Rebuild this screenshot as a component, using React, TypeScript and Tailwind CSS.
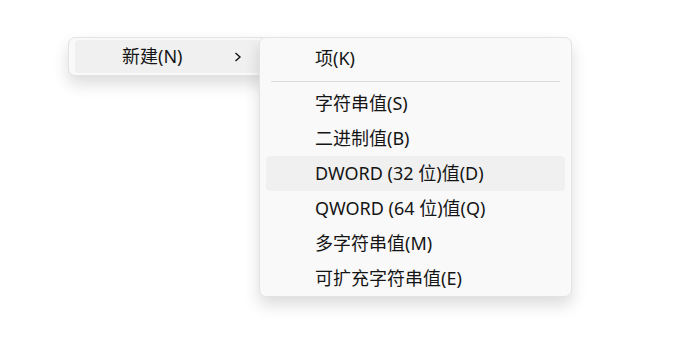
import React from "react";

const items = [
  "字符串值(S)",
  "二进制值(B)",
  "DWORD (32 位)值(D)",
  "QWORD (64 位)值(Q)",
  "多字符串值(M)",
  "可扩充字符串值(E)",
];

export default function App() {
  return (
    <div
      className="relative w-[685px] h-[353px] bg-white overflow-hidden text-[18px] text-[#151515]"
      style={{ fontFamily: '"Noto Sans", "Noto Sans CJK SC", sans-serif' }}
    >
      {/* parent menu */}
      <div className="absolute left-[68px] top-[37px] w-[200px] rounded-[7px] border border-[#e3e3e3] bg-[#f9f9f9] px-[6px] pt-[2px] pb-[2px] shadow-[0_8px_16px_rgba(0,0,0,0.14)]">
        <div className="flex h-[33px] items-center rounded-[4px] bg-[#f0f0f0] pl-[47px] pr-[19px]">
          <span className="flex-1">新建(N)</span>
          <svg width="8" height="10" viewBox="0 0 8 10" className="mt-[1px]">
            <path d="M1.5 1 L6 5 L1.5 9" fill="none" stroke="#151515" strokeWidth="1.4" />
          </svg>
        </div>
      </div>

      {/* submenu */}
      <div className="absolute left-[259px] top-[37px] w-[313px] rounded-[7px] border border-[#e3e3e3] bg-[#f9f9f9] px-[6px] pt-[3px] pb-[0px] shadow-[0_8px_16px_rgba(0,0,0,0.14)]">
        <div className="flex h-[35px] items-center rounded-[4px] pl-[49px]">项(K)</div>
        <div className="flex h-[10px] items-center px-[5px]">
          <div className="h-px w-full bg-[#dcdcdc]" />
        </div>
        {items.map((t, i) => (
          <div
            key={t}
            className={`flex h-[35px] items-center rounded-[4px] pl-[49px] ${i === 2 ? "bg-[#f0f0f0]" : ""}`}
          >
            {t}
          </div>
        ))}
      </div>
    </div>
  );
}
